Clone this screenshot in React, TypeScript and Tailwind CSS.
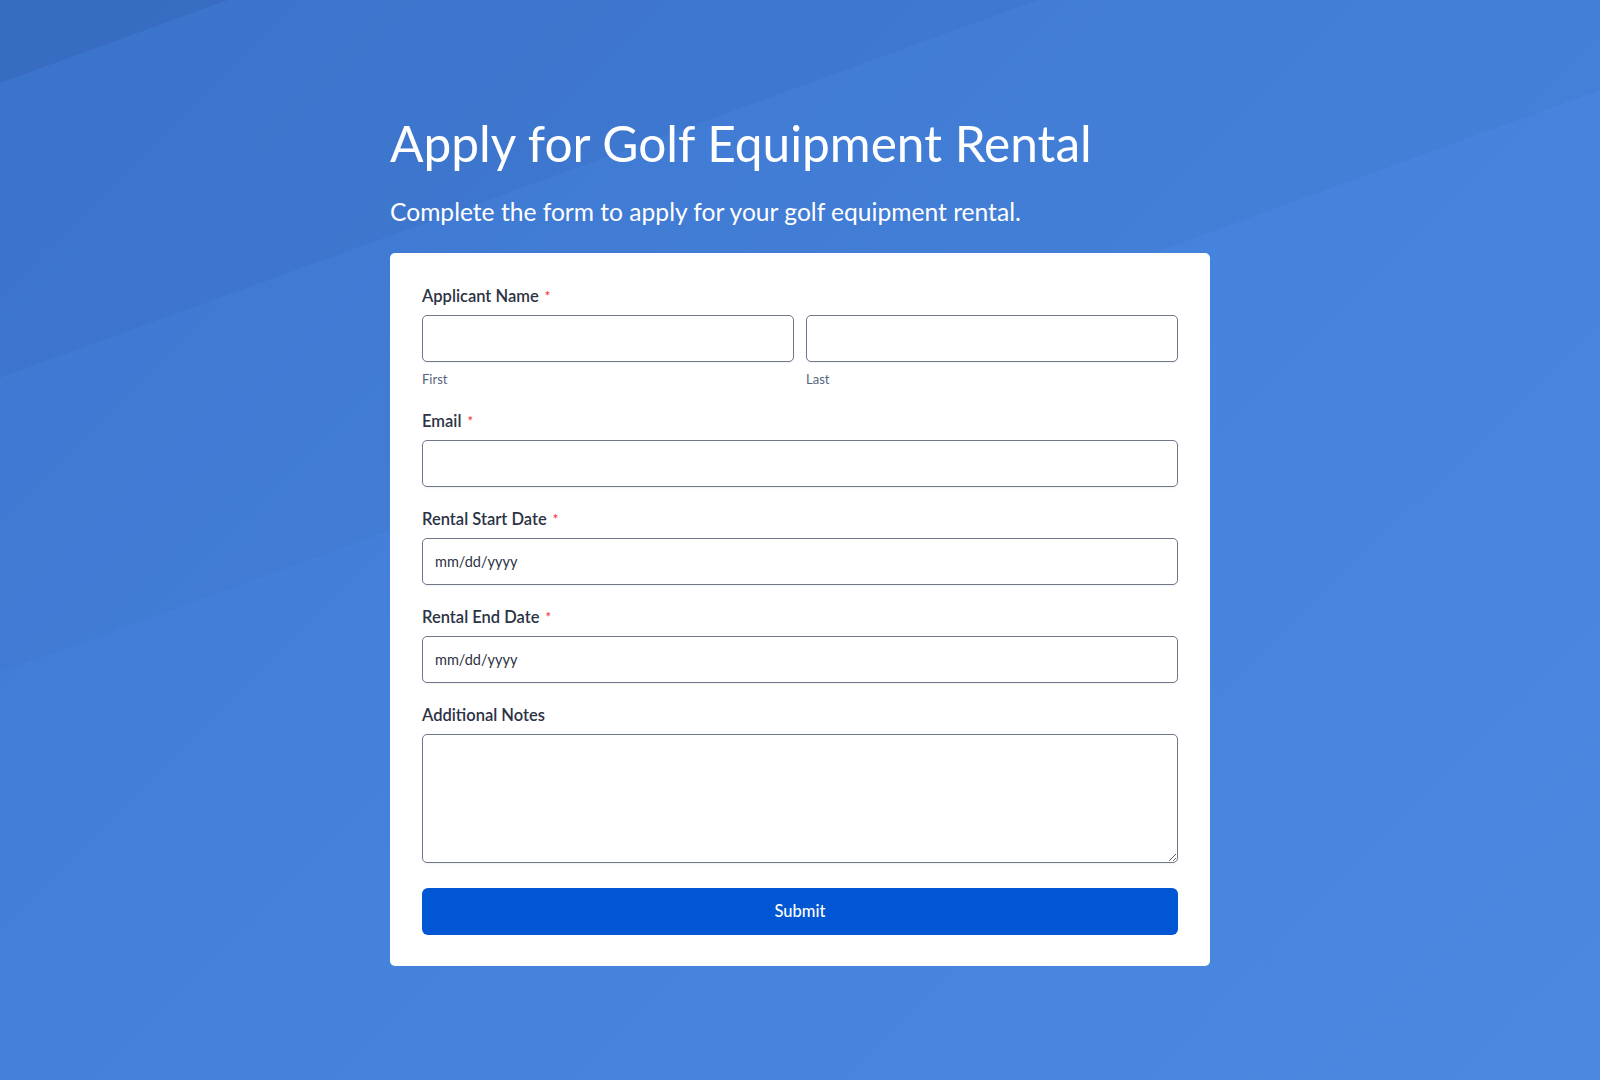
import React from 'react'

const labelCls = 'flex items-center h-[22px] text-[16.5px] font-semibold text-[#2c3345] mb-2'
const inputCls =
   'block w-full h-[47px] rounded-[5px] border border-[#6f7689] bg-white px-3 text-[14.5px] text-[#2c3345] shadow-[0_1px_2px_rgba(0,0,0,0.06)] outline-none placeholder:text-[#2c3345]'
const subCls = 'mt-2 block text-[13px] leading-[19px] text-[#57647e]'

function Req() {
   return <span className="ml-[6px] text-[13px] leading-none text-[#f23a3c]">*</span>
}

function Field({
   label,
   required,
   children,
}: {
   label: string
   required?: boolean
   children: React.ReactNode
}) {
   return (
      <div>
         <label className={labelCls}>
            {label}
            {required && <Req />}
         </label>
         {children}
      </div>
   )
}

export default function App() {
   return (
      <div className="min-h-[1080px] w-full font-[Lato,sans-serif] bg-[linear-gradient(160deg,rgba(0,10,60,0.07)_78px,transparent_78px),linear-gradient(160deg,rgba(0,10,60,0.04)_355px,transparent_355px),linear-gradient(160deg,rgba(0,10,60,0.03)_632px,transparent_632px),linear-gradient(135deg,#3f7bd6,#4b89e1)]">
         <div className="mx-auto w-[820px] pt-[112px]">
            <h1 className="text-[49.6px] leading-[62px] font-normal text-white">
               Apply for Golf Equipment Rental
            </h1>
            <p className="mt-[23px] text-[24.6px] leading-[30px] font-normal text-white">
               Complete the form to apply for your golf equipment rental.
            </p>

            <form
               className="mt-[26px] rounded-[5px] bg-white px-8 pt-8 pb-[31px]"
               onSubmit={(e) => e.preventDefault()}
            >
               <div className="flex flex-col gap-[21px]">
                  <Field label="Applicant Name" required>
                     <div className="grid grid-cols-2 gap-3">
                        <div>
                           <input type="text" className={inputCls} />
                           <span className={subCls}>First</span>
                        </div>
                        <div>
                           <input type="text" className={inputCls} />
                           <span className={subCls}>Last</span>
                        </div>
                     </div>
                  </Field>

                  <Field label="Email" required>
                     <input type="email" className={inputCls} />
                  </Field>

                  <Field label="Rental Start Date" required>
                     <input type="text" placeholder="mm/dd/yyyy" className={inputCls} />
                  </Field>

                  <Field label="Rental End Date" required>
                     <input type="text" placeholder="mm/dd/yyyy" className={inputCls} />
                  </Field>

                  <Field label="Additional Notes">
                     <textarea className="block w-full h-[129px] rounded-[5px] border border-[#6f7689] bg-white px-3 py-2 text-sm text-[#2c3345] shadow-[0_1px_2px_rgba(0,0,0,0.06)] outline-none" />
                  </Field>
               </div>

               <button
                  type="submit"
                  className="mt-[25px] block w-full h-[47px] rounded-[6px] bg-[#0056d3] text-[16.5px] font-medium text-white"
               >
                  Submit
               </button>
            </form>
         </div>
      </div>
   )
}
